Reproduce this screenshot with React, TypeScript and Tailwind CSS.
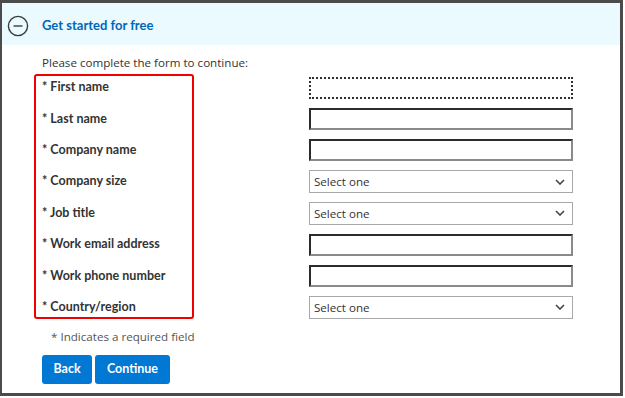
import React from 'react';

const fields = [
  { label: 'First name', kind: 'input' },
  { label: 'Last name', kind: 'input' },
  { label: 'Company name', kind: 'input' },
  { label: 'Company size', kind: 'select' },
  { label: 'Job title', kind: 'select' },
  { label: 'Work email address', kind: 'input' },
  { label: 'Work phone number', kind: 'input' },
  { label: 'Country/region', kind: 'select' },
];

function MinusCircle() {
  return (
    <svg width="22" height="22" viewBox="0 0 22 22" fill="none">
      <circle cx="11" cy="11" r="9.6" stroke="#3b3b3b" strokeWidth="1.4" />
      <line x1="6.5" y1="11" x2="15.5" y2="11" stroke="#3b3b3b" strokeWidth="1.4" />
    </svg>
  );
}

function Chevron() {
  return (
    <svg width="10" height="6" viewBox="0 0 10 6" fill="none">
      <path d="M1 1l4 4 4-4" stroke="#444" strokeWidth="1.6" />
    </svg>
  );
}

function Field({ kind, first }: { kind: string; first: boolean }) {
  if (kind === 'select') {
    return (
      <div className="flex h-[23px] w-[264px] items-center justify-between border border-[#a9a9a9] bg-white pl-[4px] pr-[7px] text-[11.6px] text-[#333]">
        <span>Select one</span>
        <Chevron />
      </div>
    );
  }
  return (
    <div
      className={
        first
          ? 'h-[22px] w-[264px] border-2 border-dotted border-[#2f2f2f] bg-white'
          : 'h-[22px] w-[264px] border-2 border-t-[#2b2b2b] border-l-[#2b2b2b] border-r-[#8a8a8a] border-b-[#8a8a8a] bg-white'
      }
    />
  );
}

export default function App() {
  return (
    <div className="h-[398px] w-[625px] bg-white font-['Open_Sans',sans-serif]">
      <div className="flex h-[396px] w-[623px] flex-col border-t-[3px] border-r-[3px] border-b-[3px] border-l-2 border-[#4b4b4b]">
        <div className="flex h-[42px] shrink-0 items-center bg-[#eafaff] pl-[5px] pt-[3px]">
          <MinusCircle />
          <span className="ml-[13px] font-['Lato',sans-serif] text-[13px] font-bold text-[#0067b8]">Get started for free</span>
        </div>
        <div className="pl-[40px] pt-[9px]">
          <p className="text-[11.6px] leading-[18px] text-[#333]">Please complete the form to continue:</p>
          <div className="flex items-start">
            <div className="mt-[2px] -ml-[8px] h-[245px] w-[160px] rounded-[3px] border-2 border-[#f00000] pl-[6px]">
              <div className="-mt-[4px] flex flex-col">
                {fields.map((f) => (
                  <div key={f.label} className="flex h-[31.4px] shrink-0 items-center font-['Lato',sans-serif] text-[12.5px] font-bold text-[#333]">
                    * {f.label}
                  </div>
                ))}
              </div>
            </div>
            <div className="ml-[115px] -mb-[6px] flex flex-col">
              {fields.map((f, i) => (
                <div key={f.label} className="flex h-[31.4px] shrink-0 items-center">
                  <Field kind={f.kind} first={i === 0} />
                </div>
              ))}
            </div>
          </div>
          <p className="mt-[9px] pl-[9px] text-[11.6px] leading-[18px] text-[#555]">* Indicates a required field</p>
          <div className="mt-[9px] flex gap-[3px]">
            <button className="h-[29px] w-[50px] rounded-[3px] bg-[#0078d4] font-['Lato',sans-serif] text-[12.5px] font-bold text-white">Back</button>
            <button className="h-[29px] w-[75px] rounded-[3px] bg-[#0078d4] font-['Lato',sans-serif] text-[12.5px] font-bold text-white">Continue</button>
          </div>
        </div>
      </div>
    </div>
  );
}
